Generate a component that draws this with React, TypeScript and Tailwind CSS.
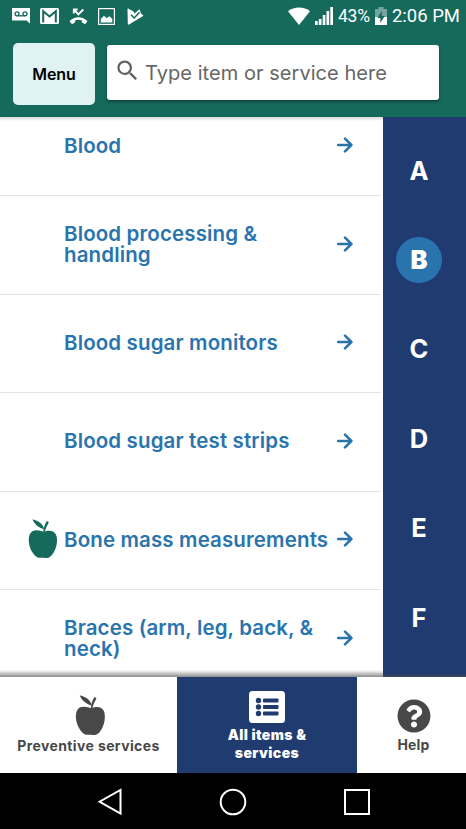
import React, { useState } from "react";
import clsx from "clsx";
import { FaQuestionCircle } from "react-icons/fa";
import { MdSearch } from "react-icons/md";

type Item = {
    name: string;
    preventive?: boolean;
};

const items: Item[] = [
    { name: "Blood" },
    { name: "Blood processing & handling" },
    { name: "Blood sugar monitors" },
    { name: "Blood sugar test strips" },
    { name: "Bone mass measurements", preventive: true },
    { name: "Braces (arm, leg, back, & neck)" },
];

const letters = ["A", "B", "C", "D", "E", "F"];

const Apple = ({ className }: { className?: string }) => (
    <svg viewBox="0 0 30 40" fill="currentColor" className={className}>
        <path d="M15.8 13.2C18.5 11.5 22.5 11.2 25.4 12.8C28.8 15 29.6 19.5 28.7 25C27.7 31 24.8 35.8 21.8 38.1C19.7 39.8 17.5 38.7 15.2 38.7C13 38.7 10.3 39.5 8.2 37.6C4.6 34.7 1.8 29.7 1 24.2C0.3 19 1.2 14.4 4.4 12.3C7.5 10.6 12.6 11.4 15.8 13.2Z" />
        <path d="M4.5 0.5C9 1.2 14.6 3.7 16.2 10.1C11.5 9.3 6.6 5.7 4.5 0.5Z" />
        <path d="M15.2 13.4C15.4 9.2 16.9 4.8 18.9 2L20.7 2.9C20.4 5.4 17.6 7.6 16.9 13.4Z" />
    </svg>
);

const Arrow = () => (
    <svg viewBox="0 0 16 16" className="h-4 w-4 -translate-y-px" fill="none" stroke="currentColor" strokeWidth="2.5" strokeLinecap="round" strokeLinejoin="round">
        <path d="M1.2 8H14M8 1.6L14.4 8L8 14.4" />
    </svg>
);

const StatusBar = () => (
    <div className="flex h-8 items-center justify-between pl-3 pr-[6px] font-[Roboto,sans-serif] text-white">
        <div className="flex items-center gap-[10px]">
            <svg viewBox="0 0 18 16" className="h-4 w-[18px]">
                <path d="M0 0H18V15.5L14.5 12.5H0Z" fill="currentColor" />
                <g fill="none" stroke="#156a5c" strokeWidth="1.3">
                    <circle cx="5" cy="5.8" r="2" />
                    <circle cx="13" cy="5.8" r="2" />
                    <path d="M5 7.8H13" />
                </g>
            </svg>
            <svg viewBox="0 0 19 16" className="h-4 w-[19px]">
                <rect width="19" height="16" rx="1.5" fill="currentColor" />
                <path d="M3.2 14.5V3.2L9.5 8.5L15.8 3.2V14.5" fill="none" stroke="#156a5c" strokeWidth="2" />
            </svg>
            <svg viewBox="0 0 19 17" className="h-[17px] w-[19px]">
                <path d="M0.5 13.2C5.5 8 13.5 8 18.5 13.2L16 16.3L12.8 14.2V12.2Q9.5 11.2 6.2 12.2V14.2L3 16.3Z" fill="currentColor" />
                <path d="M4.8 5.6V1.5H8.7M5 1.7L9.4 6.4L14.3 1.5" fill="none" stroke="currentColor" strokeWidth="1.9" />
            </svg>
            <svg viewBox="0 0 17 17" className="h-[17px] w-[17px]">
                <rect x="0.6" y="0.6" width="15.8" height="15.8" fill="none" stroke="currentColor" strokeWidth="1.2" />
                <path d="M2.8 14.5V11L6 7.8L8.7 10L11.5 8.3L14.3 11V14.5Z" fill="currentColor" />
            </svg>
            <svg viewBox="0 0 17 17" className="ml-[2px] h-[17px] w-[17px]">
                <path d="M0.5 1.4Q0.5 0.2 1.6 0.7L6.5 3.4L7.5 5.5L12.5 1.2L14 5.6L16.5 7.7L2 16.6Q0.7 17 0.8 15.6Z" fill="currentColor" />
                <path d="M4 6.8L7.2 10L12.6 4.2" fill="none" stroke="#156a5c" strokeWidth="1.5" />
            </svg>
        </div>
        <div className="flex items-center">
            <svg viewBox="0 0 22 18" className="h-[18px] w-[22px]" fill="currentColor">
                <path d="M11 18L0 4.2C6 -0.8 16 -0.8 22 4.2Z" />
            </svg>
            <svg viewBox="0 0 18 18" className="ml-[5px] h-[18px] w-[18px]" fill="currentColor">
                <path d="M0 14H2.7V18H0ZM3.8 12H6.5V18H3.8ZM7.7 8H10.4V18H7.7ZM11.5 4H14.2V18H11.5ZM15.3 0H18V18H15.3Z" />
            </svg>
            <span className="ml-[5px] w-[37px] whitespace-nowrap pt-px text-[17.5px] tracking-[-0.2px]">43%</span>
            <svg viewBox="0 0 12 18" className="h-[18px] w-3" fill="currentColor">
                <path d="M0 2H3.5V0H8.5V2H12V10H0Z" opacity="0.4" />
                <path d="M0 10H12V18H0Z" />
                <path d="M6.8 4L2.5 11H5.3V16L9.7 9H6.8Z" fill="#156a5c" />
            </svg>
            <span className="ml-[5px] whitespace-nowrap pt-px text-[18.5px]">2:06 PM</span>
        </div>
    </div>
);

const App = () => {
    const [letter, setLetter] = useState("B");

    return (
        <div className="flex h-[829px] w-[466px] flex-col overflow-hidden bg-white font-[Inter,sans-serif]">
            <header className="h-[117px] shrink-0 bg-[#156a5c]">
                <StatusBar />
                <div className="flex items-start gap-3 pl-[13px] pt-[11px]">
                    <button className="h-[62px] w-[82px] rounded-[5px] bg-[#e1f2f2] text-[16px] font-semibold tracking-[-0.1px] text-black">
                        Menu
                    </button>
                    <div className="mt-[2px] flex h-[55px] w-[332px] items-center rounded-[3px] bg-white pl-[7px] text-[#5f6061] shadow-[0_2px_3px_rgba(0,0,0,0.35)]">
                        <MdSearch className="mt-[-4px] h-[27px] w-[27px]" />
                        <span className="ml-[4px] whitespace-nowrap text-[20px] tracking-[0.05px] text-[#666]">Type item or service here</span>
                    </div>
                </div>
            </header>

            <main className="relative flex h-[560px] shrink-0 overflow-hidden">
                <div className="w-[383px]">
                    <div className="-mt-[19.5px] w-[381px]">
                        {items.map((item) => (
                            <div key={item.name} className="flex h-[98.5px] items-center border-b border-[#e4e4e4] text-[#2a74ae]">
                                <div className="flex w-16 shrink-0 justify-end pr-[6px]">
                                    {item.preventive && <Apple className="h-10 w-[30px] -translate-y-px text-[#156a5c]" />}
                                </div>
                                <div className="w-[273px] shrink-0 -translate-y-px">
                                    <p className={clsx("text-[20.5px] font-semibold leading-[21px] tracking-[0.13px]", item.name.includes("processing") && "w-[210px]")}>
                                        {item.name}
                                    </p>
                                </div>
                                <Arrow />
                            </div>
                        ))}
                    </div>
                </div>
                <nav className="flex w-[83px] flex-col items-center bg-[#1f3b70] pr-[11px] pt-[9px]">
                    {letters.map((l) => (
                        <div key={l} className="flex h-[89.4px] shrink-0 items-center">
                            <button
                                onClick={() => setLetter(l)}
                                className={clsx("h-[46px] w-[46px] rounded-full text-[25.5px] text-white", l === letter ? "bg-[#2a74ae] font-black" : "font-bold")}
                            >
                                {l}
                            </button>
                        </div>
                    ))}
                </nav>
                <div className="absolute left-0 top-0 h-[4px] w-[383px] bg-gradient-to-b from-black/15 to-transparent" />
                <div className="absolute bottom-0 left-0 h-[7px] w-[383px] bg-gradient-to-t from-black/45 to-transparent" />
                <div className="absolute bottom-0 right-0 h-[2px] w-[83px] bg-[#3a4358]" />
            </main>

            <footer className="flex h-24 shrink-0 text-center text-[14px] font-bold text-[#484848]">
                <div className="flex w-[177px] flex-col items-center pt-[18px]">
                    <Apple className="ml-[3px] h-[41px] w-[31px]" />
                    <span className="mt-px whitespace-nowrap leading-[18px] tracking-[0.38px]">Preventive services</span>
                </div>
                <div className="flex w-[180px] flex-col items-center bg-[#1f3b70] pt-[14px] font-black text-white">
                    <svg viewBox="0 0 36 32" className="h-8 w-9">
                        <rect width="36" height="32" rx="3.5" fill="currentColor" />
                        <g fill="#1f3b70">
                            <circle cx="9.5" cy="9.5" r="2.7" />
                            <circle cx="9.5" cy="16" r="2.7" />
                            <circle cx="9.5" cy="22.5" r="2.7" />
                            <rect x="14" y="7.5" width="15.5" height="4" rx="0.8" />
                            <rect x="14" y="14" width="15.5" height="4" rx="0.8" />
                            <rect x="14" y="20.5" width="15.5" height="4" rx="0.8" />
                        </g>
                    </svg>
                    <p className="mt-[3px] whitespace-nowrap leading-[18px] tracking-[0.4px]">All items &<br />services</p>
                </div>
                <div className="flex w-[109px] flex-col items-center pl-1 pt-[22px]">
                    <FaQuestionCircle className="h-[34px] w-[34px]" />
                    <span className="mt-[3px] leading-[18px] tracking-[0.2px]">Help</span>
                </div>
            </footer>

            <div className="flex h-14 shrink-0 items-center gap-[97px] bg-black pl-[98px] pt-px text-white">
                <svg viewBox="0 0 24 28" className="h-7 w-6" fill="none" stroke="currentColor" strokeWidth="2">
                    <path d="M22.5 2V25.5L1.5 13.7Z" />
                </svg>
                <svg viewBox="0 0 28 28" className="h-7 w-7" fill="none" stroke="currentColor" strokeWidth="2">
                    <circle cx="14" cy="14" r="12.3" />
                </svg>
                <svg viewBox="0 0 26 28" className="h-7 w-[26px]" fill="none" stroke="currentColor" strokeWidth="2">
                    <rect x="1" y="2" width="24" height="24" />
                </svg>
            </div>
        </div>
    );
};

export default App;
